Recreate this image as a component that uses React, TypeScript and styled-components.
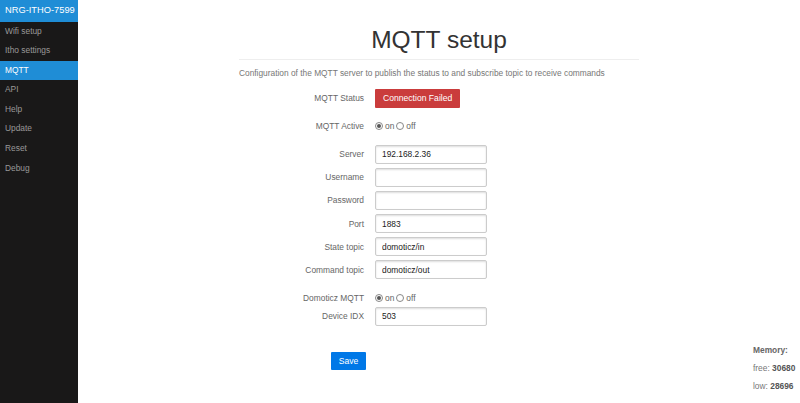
import React from "react";
import styled, { createGlobalStyle } from "styled-components";

const Global = createGlobalStyle`
  html, body { margin: 0; padding: 0; background: #fff; }
  body { font-family: "Liberation Sans", Arial, Helvetica, sans-serif; }
  * { box-sizing: border-box; }
`;

const Layout = styled.div`
  display: flex;
  width: 800px;
  height: 403px;
  position: relative;
  overflow: hidden;
`;

const Sidebar = styled.nav`
  width: 78px;
  flex: none;
  background: #191818;
  display: flex;
  flex-direction: column;
`;

const Brand = styled.div`
  height: 21.5px;
  background: #1f8dd6;
  color: #fff;
  font-size: 9.3px;
  line-height: 21px;
  padding-left: 5px;
  white-space: nowrap;
`;

const MenuItem = styled.div<{ $active?: boolean }>`
  height: 19.6px;
  line-height: 19.6px;
  padding-left: 5px;
  font-size: 8.4px;
  color: ${(p) => (p.$active ? "#fff" : "#999")};
  background: ${(p) => (p.$active ? "#1f8dd6" : "transparent")};
  white-space: nowrap;
`;

const Main = styled.main`
  flex: 1;
  display: flex;
  flex-direction: column;
  align-items: center;
`;

const Content = styled.div`
  width: 400px;
  display: flex;
  flex-direction: column;
`;

const Title = styled.h1`
  margin: 25.5px 0 0;
  font-size: 24.5px;
  line-height: 28px;
  font-weight: normal;
  color: #333;
  text-align: center;
  padding-bottom: 5px;
  border-bottom: 1px solid #eee;
`;

const Description = styled.p`
  margin: 8px 0 0;
  font-size: 8.35px;
  line-height: 11px;
  color: #777;
  white-space: nowrap;
`;

const Form = styled.div`
  display: flex;
  flex-direction: column;
  margin-top: 10px;
`;

const Row = styled.div<{ $h?: number; $mt?: number }>`
  display: flex;
  align-items: center;
  height: ${(p) => p.$h ?? 19}px;
  margin-top: ${(p) => p.$mt ?? 0}px;
`;

const Label = styled.label`
  width: 125px;
  margin-right: 11px;
  text-align: right;
  font-size: 8.4px;
  color: #666;
  white-space: nowrap;
`;

const TextInput = styled.input`
  width: 112px;
  height: 19px;
  border: 1px solid #ccc;
  border-radius: 2px;
  box-shadow: inset 0 1px 2px #ddd;
  padding: 0 6px;
  font-family: "Liberation Sans", Arial, sans-serif;
  font-size: 8.4px;
  color: #222;
  background: #fff;
  outline: none;
`;

const StatusBadge = styled.div`
  height: 19px;
  padding: 0 8px;
  background: #ca3c3c;
  color: #fff;
  font-size: 8.6px;
  line-height: 19px;
  border-radius: 1px;
  white-space: nowrap;
`;

const RadioGroup = styled.div`
  display: flex;
  align-items: center;
  font-size: 8.4px;
  color: #666;
`;

const Radio = styled.span<{ $checked?: boolean }>`
  width: 8px;
  height: 8px;
  border-radius: 50%;
  border: 1px solid #888;
  background: #fff;
  margin: 0 2px 0 ${(p) => (p.$checked ? 0 : 2)}px;
  display: inline-flex;
  align-items: center;
  justify-content: center;
  &::after {
    content: "";
    width: 4px;
    height: 4px;
    border-radius: 50%;
    background: ${(p) => (p.$checked ? "#555" : "transparent")};
  }
`;

const SaveButton = styled.button`
  margin: 26px 0 0 92px;
  width: 35px;
  height: 18px;
  padding: 0;
  border: none;
  border-radius: 1px;
  background: #0078e7;
  color: #fff;
  font-family: "Liberation Sans", Arial, sans-serif;
  font-size: 8.6px;
  align-self: flex-start;
`;

const Memory = styled.div`
  position: absolute;
  left: 753px;
  top: 341px;
  font-size: 8.4px;
  color: #777;
  line-height: 18px;
  white-space: nowrap;
`;

const MemTitle = styled.div`
  font-weight: bold;
  color: #666;
`;

const MemValue = styled.span`
  font-weight: bold;
  color: #555;
`;

const menu = ["Wifi setup", "Itho settings", "MQTT", "API", "Help", "Update", "Reset", "Debug"];

const fields: [string, string][] = [
  ["Server", "192.168.2.36"],
  ["Username", ""],
  ["Password", ""],
  ["Port", "1883"],
  ["State topic", "domoticz/in"],
  ["Command topic", "domoticz/out"],
];

function OnOff() {
  return (
    <RadioGroup>
      <Radio $checked />
      on
      <Radio />
      off
    </RadioGroup>
  );
}

export default function App() {
  return (
    <Layout>
      <Global />
      <Sidebar>
        <Brand>NRG-ITHO-7599</Brand>
        {menu.map((m) => (
          <MenuItem key={m} $active={m === "MQTT"}>
            {m}
          </MenuItem>
        ))}
      </Sidebar>
      <Main>
        <Content>
          <Title>MQTT setup</Title>
          <Description>
            Configuration of the MQTT server to publish the status to and subscribe topic to receive commands
          </Description>
          <Form>
            <Row>
              <Label>MQTT Status</Label>
              <StatusBadge>Connection Failed</StatusBadge>
            </Row>
            <Row $h={15} $mt={11}>
              <Label>MQTT Active</Label>
              <OnOff />
            </Row>
            {fields.map(([l, v], i) => (
              <Row key={l} $mt={i === 0 ? 11 : 4.2}>
                <Label>{l}</Label>
                <TextInput type={l === "Password" ? "password" : "text"} defaultValue={v} />
              </Row>
            ))}
            <Row $h={15} $mt={11}>
              <Label>Domoticz MQTT</Label>
              <OnOff />
            </Row>
            <Row $mt={1.5}>
              <Label>Device IDX</Label>
              <TextInput defaultValue="503" />
            </Row>
            <SaveButton>Save</SaveButton>
          </Form>
        </Content>
      </Main>
      <Memory>
        <MemTitle>Memory:</MemTitle>
        <div>
          free: <MemValue>30680</MemValue>
        </div>
        <div>
          low: <MemValue>28696</MemValue>
        </div>
      </Memory>
    </Layout>
  );
}
